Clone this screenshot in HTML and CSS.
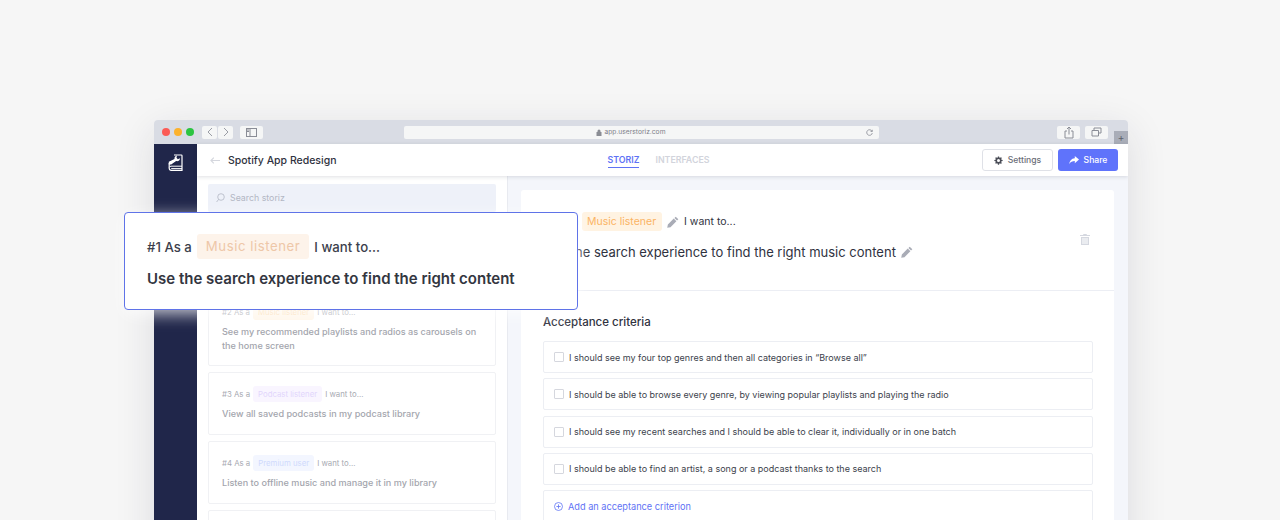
FILE: index.html
```html
<!DOCTYPE html>
<html lang="en">
<head>
<meta charset="utf-8">
<title>Userstoriz</title>
<link rel="stylesheet" href="styles.css">
</head>
<body>
<div class="stage">
  <div class="window">
    <div class="chrome">
      <div class="lights"><i class="light red"></i><i class="light amber"></i><i class="light green"></i></div>
      <div class="navpair">
        <span class="cbtn nav"><svg width="6" height="10" viewBox="0 0 6 10"><path d="M5 1 1 5l4 4" fill="none" stroke="#9a9da5"/></svg></span>
        <span class="cbtn nav"><svg width="6" height="10" viewBox="0 0 6 10"><path d="M1 1l4 4-4 4" fill="none" stroke="#9a9da5"/></svg></span>
      </div>
      <span class="cbtn side"><svg width="11" height="9" viewBox="0 0 11 9"><rect x=".5" y=".5" width="10" height="8" fill="none" stroke="#8a8d96"/><path d="M4 .5v8M1 2h2M1 3.500h2" stroke="#8a8d96" fill="none"/></svg></span>
      <div class="url"><span class="urltext"><svg class="lock" width="6" height="7" viewBox="0 0 6 7"><path d="M.5 3h5v4h-5zM1.500 3V2a1.500 1.500 0 0 1 3 0v1" fill="#8a8d94"/></svg>app.userstoriz.com</span>
        <svg class="reload" width="7" height="7" viewBox="0 0 7 7"><path d="M6 2.200A2.800 2.800 0 1 0 6.300 4M6.300 .8v1.700H4.600" fill="none" stroke="#8a8d96" stroke-width=".8"/></svg></div>
      <div class="chrome-right">
        <span class="cbtn tool"><svg width="10" height="13" viewBox="0 0 10 13"><path d="M3 5H1v7h8V5H7M5 8.500V1M3 3l2-2 2 2" fill="none" stroke="#8a8d96"/></svg></span>
        <span class="cbtn tool"><svg width="11" height="10" viewBox="0 0 11 10"><path d="M3 3V1h7v5H8M1 3.500h6.500v5.500H1z" fill="none" stroke="#8a8d96"/></svg></span>
      </div>
      <span class="newtab">+</span>
    </div>
    <div class="app">
      <aside class="rail">
        <svg class="logo" width="15" height="18" viewBox="0 0 15 18"><path d="M6 1H13.300c.4 0 .7.300.7.700V16.300H3.200A2 2 0 0 1 1.200 14.300V9" fill="none" stroke="#fff" stroke-width="1.200"/><path d="M1.300 13.200c.4-.7 1-1 1.700-1H14M3.200 14.600H14" fill="none" stroke="#fff" stroke-width="1"/><path d="M9 1.600c-1.700.3-2.800 1.700-2.500 3.500L.8 7.800v2.800h2.400l4.900-3.500c1.900.6 3.800-.7 4-2.800l-2.300 1-1.300-1.600z" fill="#fff"/></svg>
      </aside>
      <div class="content">
        <header class="topbar">
          <div class="title">
            <svg width="10" height="7" viewBox="0 0 10 7"><path d="M10 3.500H1M3.800.6 1 3.500l2.800 2.900" fill="none" stroke="#d5d7de" stroke-width="1.200"/></svg>
            <h1>Spotify App Redesign</h1>
          </div>
          <nav class="tabs"><a class="tab active">STORIZ</a><a class="tab">INTERFACES</a></nav>
          <div class="actions">
            <button class="btn ghost"><svg width="9" height="9" viewBox="0 0 24 24"><path fill="#4a4d57" d="M24 13.600v-3.200l-3-.5a9 9 0 0 0-.8-2l1.800-2.500-2.300-2.300L17.200 4.800a9 9 0 0 0-2-.8L14.600 1h-3.200l-.5 3a9 9 0 0 0-2 .8L6.400 3 4.100 5.300l1.800 2.500a9 9 0 0 0-.8 2l-3.100.6v3.200l3 .5a9 9 0 0 0 .8 2l-1.800 2.500 2.300 2.300 2.500-1.800a9 9 0 0 0 2 .8l.6 3.100h3.200l.5-3a9 9 0 0 0 2-.8l2.500 1.800 2.300-2.300-1.800-2.500a9 9 0 0 0 .8-2zM13 16a4 4 0 1 1 0-8 4 4 0 0 1 0 8z" transform="translate(-1 0)"/></svg>Settings</button>
            <button class="btn primary"><svg width="10" height="9" viewBox="0 0 10 9"><path fill="#fff" d="M5.800 0 10 3.600 5.800 7.200V5C3.300 5 1.600 5.800.3 8 .6 5 2.300 2.500 5.800 2.200z"/></svg>Share</button>
          </div>
        </header>
        <div class="panes">
          <section class="listpane">
            <div class="search"><svg width="9" height="10" viewBox="0 0 9 10"><circle cx="5" cy="4" r="3.300" fill="none" stroke="#b3b7c4" stroke-width=".8"/><path d="M2.600 6.400.6 9" stroke="#b3b7c4" stroke-width=".8"/></svg>Search storiz</div>
            <article class="story first"></article>
            <article class="story tall">
              <p class="meta">#2 As a <span class="tag orange">Music listener</span> I want to...</p>
              <p class="story-text">See my recommended playlists and radios as carousels on the home screen</p>
            </article>
            <article class="story">
              <p class="meta">#3 As a <span class="tag purple">Podcast listener</span> I want to...</p>
              <p class="story-text">View all saved podcasts in my podcast library</p>
            </article>
            <article class="story">
              <p class="meta">#4 As a <span class="tag blue">Premium user</span> I want to...</p>
              <p class="story-text">Listen to offline music and manage it in my library</p>
            </article>
            <article class="story"></article>
          </section>
          <section class="detailpane">
            <div class="detail">
              <div class="detail-head">
                <div class="detail-main">
                  <p class="detail-meta"><span class="dnum">#1 As a</span><span class="dtag">Music listener</span>
                    <svg class="pen" width="12" height="12" viewBox="0 0 11 11"><path fill="#a9acb6" d="M8 .6l2.400 2.400-1.200 1.200-2.400-2.400zM6.200 2.400l2.400 2.400-5.400 5.400-3 .6.600-3z"/></svg>
                    I want to...</p>
                  <h2 class="detail-title">Use the search experience to find the right music content
                    <svg class="pen" width="12" height="12" viewBox="0 0 11 11"><path fill="#a9acb6" d="M8 .6l2.400 2.400-1.200 1.200-2.400-2.400zM6.200 2.400l2.400 2.400-5.400 5.400-3 .6.600-3z"/></svg></h2>
                </div>
                <svg class="trash" width="10" height="11" viewBox="0 0 10 11"><path fill="#d5d8e0" d="M3.500 0h3l.5 1h3v1H0V1h3zM1 3h8v8H1zm1.500 1v6h1V4zm2 0v6h1V4zm2 0v6h1V4z" fill-rule="evenodd"/></svg>
              </div>
              <div class="criteria">
                <h3>Acceptance criteria</h3>
                <div class="crit"><i class="check"></i>I should see my four top genres and then all categories in “Browse all”</div>
                <div class="crit"><i class="check"></i>I should be able to browse every genre, by viewing popular playlists and playing the radio</div>
                <div class="crit"><i class="check"></i>I should see my recent searches and I should be able to clear it, individually or in one batch</div>
                <div class="crit"><i class="check"></i>I should be able to find an artist, a song or a podcast thanks to the search</div>
                <div class="crit add"><svg width="9" height="9" viewBox="0 0 9 9"><circle cx="4.500" cy="4.500" r="4" fill="none" stroke="#5f73f5" stroke-width=".8"/><path d="M4.500 2.400v4.200M2.400 4.500h4.200" stroke="#5f73f5" stroke-width=".8"/></svg>Add an acceptance criterion</div>
              </div>
            </div>
          </section>
        </div>
      </div>
    </div>
  </div>
  <div class="popover">
    <p class="pop-meta">#1 As a <span class="pop-tag">Music listener</span> I want to...</p>
    <p class="pop-title">Use the search experience to find the right content</p>
  </div>
</div>
</body>
</html>
```

FILE: styles.css
```css
* { box-sizing: border-box; }
html, body { margin: 0; height: 100%; overflow: hidden; }
body { background: #f6f6f6; font-family: "Inter", "Liberation Sans", sans-serif; color: #2f3240; }
p, h1, h2, h3 { margin: 0; font-weight: inherit; }
.stage { position: relative; width: 1280px; height: 520px; overflow: hidden; padding: 120px 152px 0 154px; }
.window { width: 974px; height: 440px; border-radius: 4px 4px 0 0; overflow: hidden; box-shadow: 0 10px 40px rgba(30,35,60,.12); display: flex; flex-direction: column; }
.chrome { height: 24px; background: #d9dce4; display: flex; align-items: center; padding: 0 0 0 8px; flex: none; position: relative; }
.lights { display: flex; gap: 4px; }
.light { width: 8px; height: 8px; border-radius: 50%; }
.red { background: #fb5b56; } .amber { background: #fcb22d; } .green { background: #2cc441; }
.navpair { display: flex; margin-left: 8px; gap: 1px; }
.cbtn { background: #f5f6f6; border-radius: 2px; height: 13px; display: flex; align-items: center; justify-content: center; }
.nav { width: 15px; }
.side { width: 23px; margin-left: 7px; }
.url { margin-left: 141px; width: 475px; height: 13px; background: #f5f6f6; border-radius: 2px; display: flex; align-items: center; justify-content: center; position: relative; color: #7d8089; }
.urltext { display: flex; align-items: center; gap: 3px; font-size: 6.700px; margin-right: 22px; }
.reload { position: absolute; right: 6px; top: 3px; }
.chrome-right { display: flex; gap: 5px; margin-left: 178px; }
.tool { width: 23px; }
.newtab { position: absolute; right: 0; bottom: 0; width: 14px; height: 13px; background: #a9adb8; color: #5d616c; font-size: 10px; line-height: 13px; text-align: center; }
.app { flex: 1; display: flex; min-height: 0; }
.rail { width: 43px; flex: none; background: #20264a; display: flex; justify-content: center; padding-top: 10px; }
.logo { display: block; }
.content { flex: 1; display: flex; flex-direction: column; min-width: 0; }
.topbar { height: 32px; flex: none; background: #fff; display: grid; grid-template-columns: 1fr auto 1fr; align-items: center; padding: 0 10px 0 13px; box-shadow: 0 1px 4px rgba(30,35,60,.14); position: relative; z-index: 1; }
.title { display: flex; align-items: center; gap: 8px; }
h1 { font-size: 10.500px; font-weight: 500; color: #2f3240; }
.tabs { display: flex; gap: 16px; margin: 2px 11px 0 0; }
.tab { font-size: 8.800px; font-weight: 600; color: #d2d4dc; padding-bottom: 2px; border-bottom: 1px solid transparent; }
.tab.active { color: #5f73f5; border-bottom-color: #5f73f5; }
.actions { display: flex; gap: 5px; justify-self: end; }
.btn { height: 22px; border-radius: 3px; font: 500 8.600px "Inter", sans-serif; display: flex; align-items: center; justify-content: center; gap: 5px; padding: 0; }
.ghost { width: 71px; background: #fff; border: 1px solid #dfe1e7; color: #6b6e78; }
.primary { width: 60px; background: #5f73fb; border: 0; color: #fff; }
.panes { flex: 1; display: flex; min-height: 0; }
.listpane { width: 311px; flex: none; background: #fff; border-right: 1px solid #e8eaf0; padding: 8px 11px; display: flex; flex-direction: column; gap: 6px; }
.search { height: 28px; flex: none; background: #eef1f9; border-radius: 2px; display: flex; align-items: center; gap: 5px; padding: 0 0 1px 8px; font-size: 8.800px; color: #b3b7c4; }
.story { border: 1px solid #f0f1f4; border-radius: 2px; padding: 13px 13px 0; height: 63px; flex: none; }
.first { height: 66px; }
.tall { height: 76px; }
.meta { font-size: 7.800px; color: #a8aab2; display: flex; align-items: center; gap: 3px; height: 16px; white-space: nowrap; }
.tag { border-radius: 3px; padding: 0 5px; height: 16px; line-height: 16px; }
.orange { background: #fff6ea; color: #fbdcb4; }
.purple { background: #f9f5ff; color: #e2d5fc; }
.blue { background: #f3f6ff; color: #cfdafd; }
.story-text { margin-top: 4.500px; font-size: 9.100px; line-height: 14px; font-weight: 500; color: #a3a5ad; }
.detailpane { flex: 1; background: #f4f6fb; padding: 14px 14px 0 13px; min-width: 0; }
.detail { background: #fff; border-radius: 3px 3px 0 0; height: 100%; }
.detail-head { height: 101px; border-bottom: 1px solid #eceef4; padding: 22px 24px 0 22px; display: flex; justify-content: space-between; }
.detail-meta { font-size: 10.500px; color: #2f3240; display: flex; align-items: center; gap: 5px; height: 19px; }
.dnum { width: 34px; white-space: nowrap; }
.dtag { background: #fff3e2; color: #fbb364; border-radius: 3px; padding: 0 6px 0 5px; height: 19px; line-height: 19px; }
.detail-title { margin-top: 13px; font-size: 13px; font-weight: 400; color: #2f3240; display: flex; align-items: center; gap: 5px; }
.trash { margin: 22px 0 0; }
.criteria { padding: 24px 21px 0 22px; }
h3 { font-size: 11.500px; font-weight: 500; color: #2f3240; height: 17px; margin-bottom: 9px; }
.crit { height: 32px; border: 1px solid #eceef3; border-radius: 2px; margin-bottom: 5.250px; display: flex; align-items: center; padding-left: 10px; font-size: 9px; color: #3c3f4c; }
.check { width: 10px; height: 10px; border: 1px solid #d5d7de; border-radius: 1px; margin-right: 5px; flex: none; }
.add { color: #5f73f5; gap: 5px; font-size: 9.200px; }
.popover { position: absolute; left: 124px; top: 212px; width: 454px; height: 98px; background: #fff; border: 1px solid #5f73e8; border-radius: 4px; padding: 21px 22px 0; box-shadow: 0 4px 16px rgba(255,255,255,.75); }
.pop-meta { display: flex; align-items: center; gap: 5px; font-size: 13.200px; font-weight: 500; color: #3c3f4c; height: 25px; }
.pop-tag { background: #fdf3ea; color: #eec7a8; border-radius: 3px; height: 25px; line-height: 25px; padding: 0 9px; letter-spacing: .55px; font-weight: 400; }
.pop-title { margin-top: 10px; font-size: 15px; font-weight: 600; color: #33363f; }
```
